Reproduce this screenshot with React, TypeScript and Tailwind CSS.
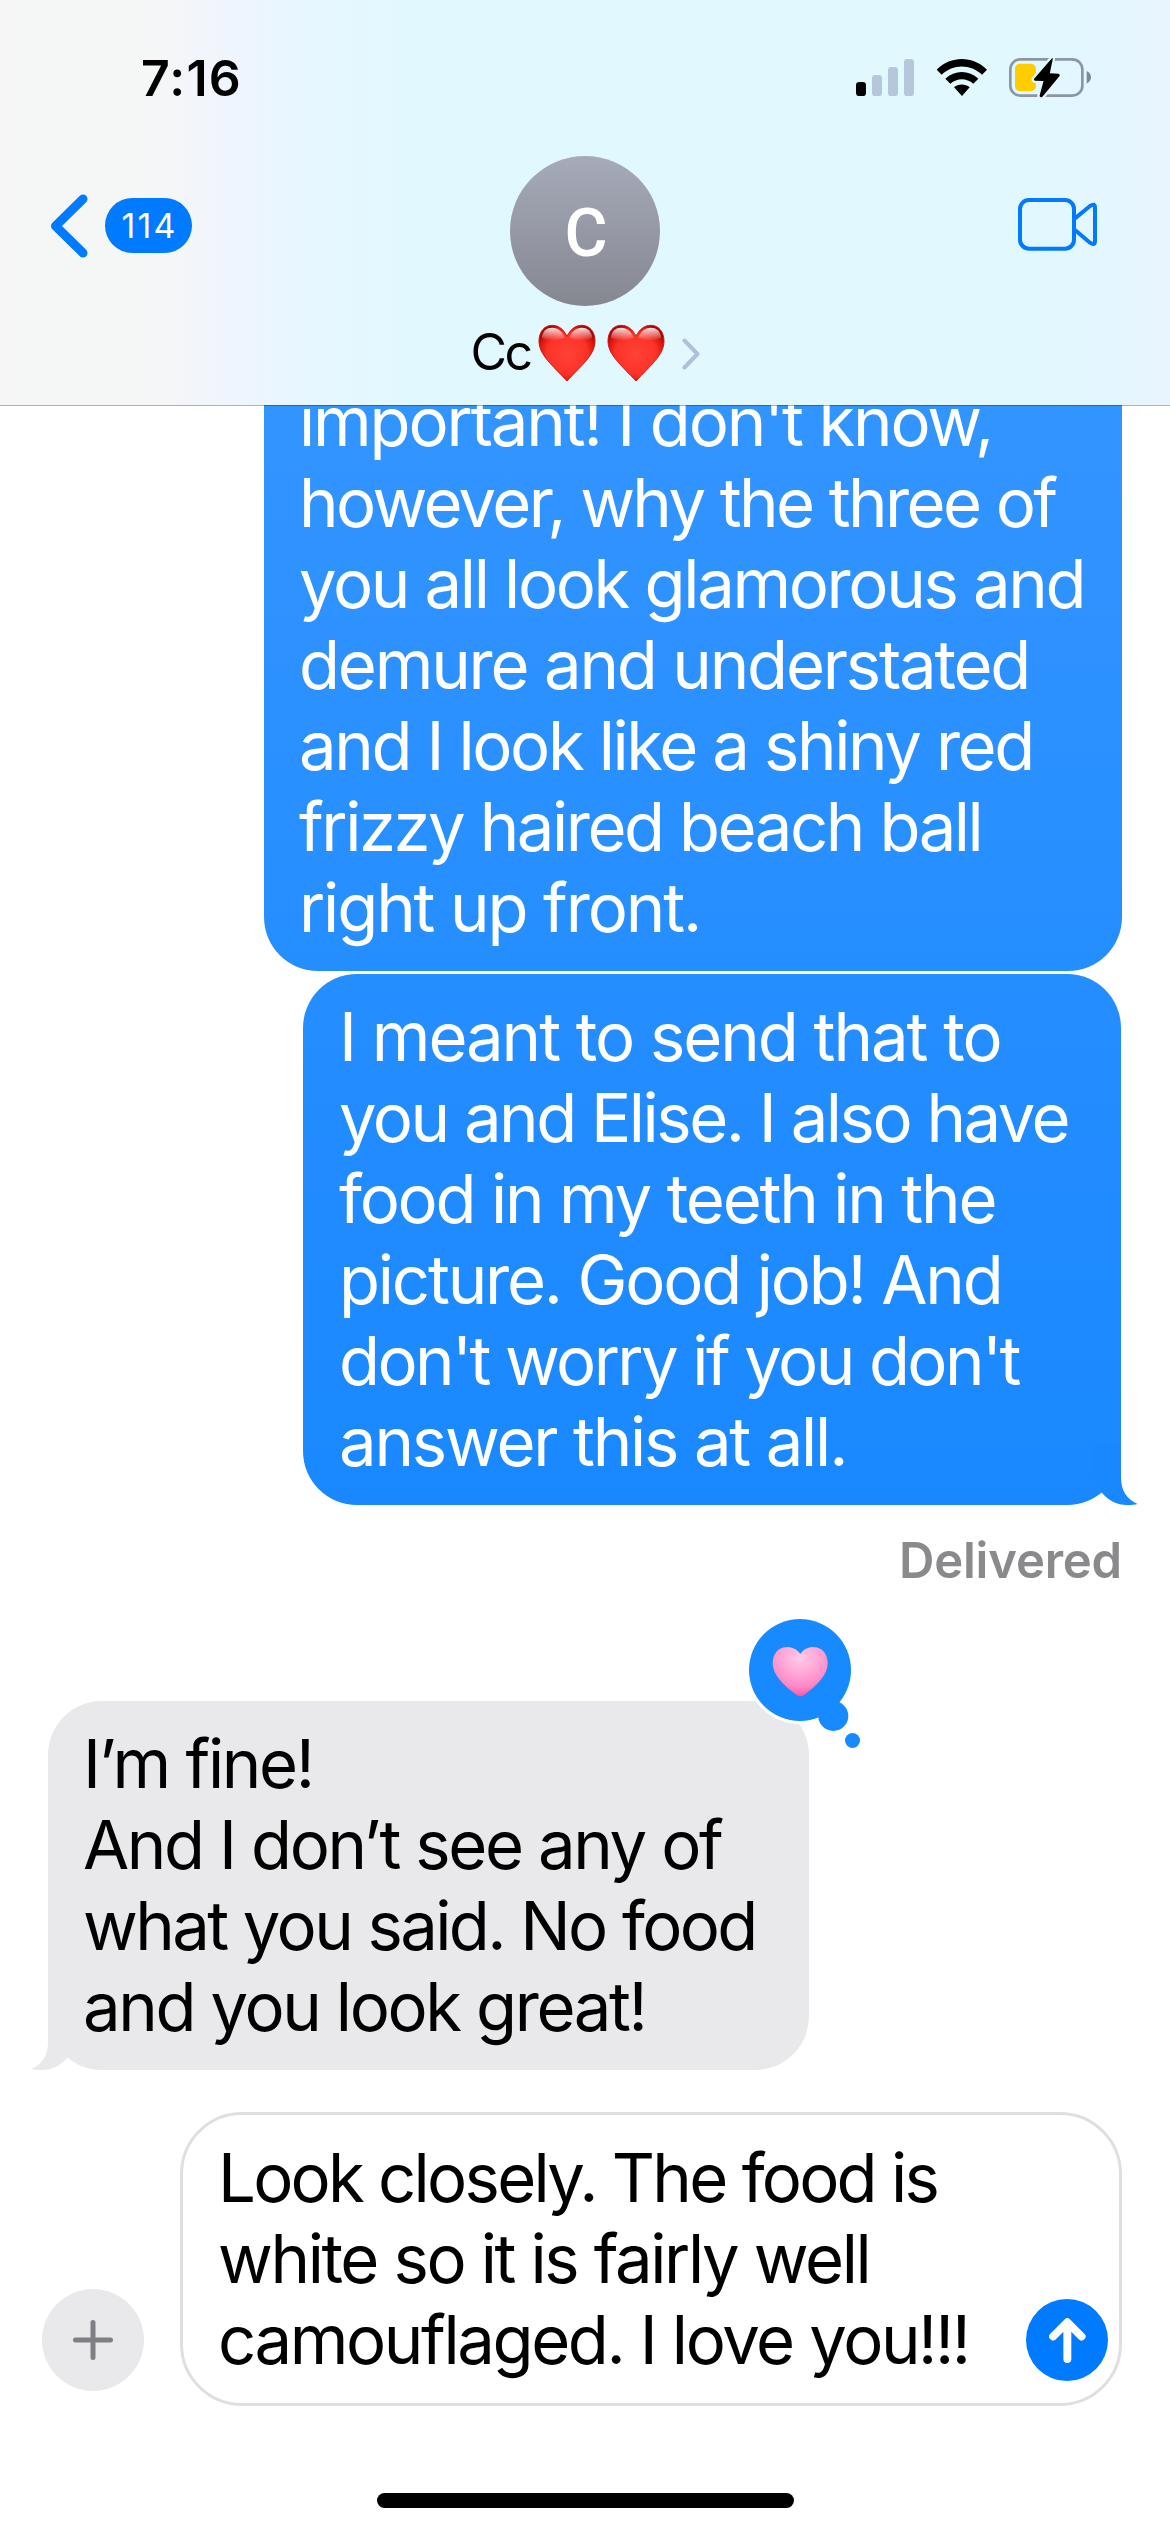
import { clsx } from 'clsx';

interface Line {
  text: string;
  tracking: string;
}

const firstMessage: Line[] = [
  { text: "important! I don't know,", tracking: 'tracking-[-2.15px]' },
  { text: 'however, why the three of', tracking: 'tracking-[-2.6px]' },
  { text: 'you all look glamorous and', tracking: 'tracking-[-2.35px]' },
  { text: 'demure and understated', tracking: 'tracking-[-2.2px]' },
  { text: 'and I look like a shiny red', tracking: 'tracking-[-2.4px]' },
  { text: 'frizzy haired beach ball', tracking: 'tracking-[-2.45px]' },
  { text: 'right up front.', tracking: 'tracking-[-2.15px]' },
];

const secondMessage: Line[] = [
  { text: 'I meant to send that to', tracking: 'tracking-[-2.05px]' },
  { text: 'you and Elise. I also have', tracking: 'tracking-[-2.5px]' },
  { text: 'food in my teeth in the', tracking: 'tracking-[-2.2px]' },
  { text: 'picture. Good job! And', tracking: 'tracking-[-2.2px]' },
  { text: "don't worry if you don't", tracking: 'tracking-[-2.6px]' },
  { text: 'answer this at all.', tracking: 'tracking-[-2.2px]' },
];

const replyMessage: Line[] = [
  { text: 'I’m fine!', tracking: 'tracking-[-2.3px]' },
  { text: 'And I don’t see any of', tracking: 'tracking-[-2.4px]' },
  { text: 'what you said. No food', tracking: 'tracking-[-2.6px]' },
  { text: 'and you look great!', tracking: 'tracking-[-2.4px]' },
];

const draft: Line[] = [
  { text: 'Look closely. The food is', tracking: 'tracking-[-2.75px]' },
  { text: 'white so it is fairly well', tracking: 'tracking-[-2.4px]' },
  { text: 'camouflaged. I love you!!!', tracking: 'tracking-[-2.4px]' },
];

function Lines({ lines }: { lines: Line[] }) {
  return (
    <div className="text-[67px] leading-[81px] whitespace-pre">
      {lines.map((line) => (
        <div key={line.text} className={line.tracking}>
          {line.text}
        </div>
      ))}
    </div>
  );
}

function SignalIcon() {
  return (
    <svg viewBox="78 48 174 132" className="w-[58px] h-11">
      <rect x="78" y="126" width="30" height="42" rx="10" fill="#000" />
      <rect x="126" y="105" width="30" height="63" rx="10" fill="#b7c7db" />
      <rect x="174" y="81" width="30" height="87" rx="10" fill="#b7c7db" />
      <rect x="222" y="57" width="30" height="111" rx="10" fill="#b7c7db" />
    </svg>
  );
}

function WifiIcon() {
  return (
    <svg viewBox="320 48 150 132" className="w-[50px] h-11">
      <path d="M319 89 C361 46 428 46 470 89 L455 104 C421 71 368 71 334 104 Z" />
      <path d="M345 116 C373 89 416 89 444 116 L429 131 C409 113 380 113 360 131 Z" />
      <path d="M371 142 C384 131 405 131 418 142 L395 168 Z" />
    </svg>
  );
}

function BatteryIcon() {
  return (
    <svg viewBox="537 48 247 132" className="w-[82px] h-11">
      <rect x="541" y="58" width="217" height="109" rx="30" fill="none" stroke="#8a95a8" strokeWidth="8" />
      <path d="M771 93 Q784 100 784 112 Q784 124 771 131 Z" fill="#7f8894" />
      <rect x="555" y="71" width="63" height="83" rx="15" fill="#ffcc00" />
      <path
        d="M667 54 L612 117 Q611 122 616 122 L641 123 L629 168 Q632 174 637 171 L690 107 Q690 102 686 101 L660 100 L669 56 Z"
        fill="#000"
        stroke="#e4f7ff"
        strokeWidth="14"
        strokeLinejoin="round"
        paintOrder="stroke"
      />
    </svg>
  );
}

function VideoIcon() {
  return (
    <svg viewBox="54 52 240 162" className="w-20 h-[54px]" fill="none" stroke="#007aff" strokeWidth="12">
      <rect x="60" y="61" width="162" height="146" rx="27" />
      <path d="M224 117 L270 79 Q285 69 285 84 V184 Q285 199 270 189 L224 150" />
    </svg>
  );
}

function RedHeart() {
  return (
    <svg viewBox="230 40 176 176" className="w-[58px] h-[58px]" role="img" aria-label="❤️">
      <defs>
        <radialGradient id="heartBody" cx="0.5" cy="0.52" r="0.56">
          <stop offset="0" stopColor="#ff4236" />
          <stop offset="0.65" stopColor="#fc3227" />
          <stop offset="0.9" stopColor="#d8150d" />
          <stop offset="1" stopColor="#a80402" />
        </radialGradient>
        <linearGradient id="heartShine" x1="0" y1="0" x2="0" y2="1">
          <stop offset="0" stopColor="#fff" stopOpacity="0.9" />
          <stop offset="1" stopColor="#fff" stopOpacity="0" />
        </linearGradient>
      </defs>
      <path
        d="M318 77 C306 53 290 44 273 44 C249 44 233 64 233 92 C233 134 275 166 318 213 C361 166 403 134 403 92 C403 64 387 44 363 44 C346 44 330 53 318 77 Z"
        fill="url(#heartBody)"
        stroke="#cf1a14"
        strokeWidth="3"
      />
      <path d="M241 82 C244 61 256 51 273 51 C291 51 304 62 311 82 Q276 98 241 82 Z" fill="url(#heartShine)" />
      <path d="M395 82 C392 61 380 51 363 51 C345 51 332 62 325 82 Q360 98 395 82 Z" fill="url(#heartShine)" />
    </svg>
  );
}

function Reaction() {
  return (
    <svg viewBox="78 48 345 402" className="absolute left-[698px] -top-[85px] w-[115px] h-[134px]">
      <defs>
        <radialGradient id="pinkHeart" cx="0.5" cy="0.22" r="0.8">
          <stop offset="0" stopColor="#ffcbe9" />
          <stop offset="0.45" stopColor="#ffa3d6" />
          <stop offset="0.75" stopColor="#fe86c5" />
          <stop offset="1" stopColor="#ff4d9c" />
        </radialGradient>
      </defs>
      <circle cx="240" cy="210" r="162" fill="#fff" />
      <g fill="#178aff">
        <circle cx="240" cy="210" r="153" />
        <circle cx="340" cy="348" r="45" />
        <circle cx="397.5" cy="421.5" r="22.5" />
      </g>
      <path
        d="M241 162 C230 147 217 141 202 141 C175 141 158 161 158 190 C158 224 190 257 231 286 Q241 292 251 286 C292 257 323 224 323 190 C323 161 306 141 279 141 C264 141 251 147 241 162 Z"
        fill="url(#pinkHeart)"
      />
    </svg>
  );
}

function BubbleTail({ side }: { side: 'left' | 'right' }) {
  return (
    <svg
      viewBox="0 0 53 60"
      className={clsx(
        'absolute bottom-0 w-[53px] h-[60px]',
        side === 'right' ? '-right-[17px] text-[#1988ff]' : '-left-[17px] -scale-x-100 text-[#e9e9eb]',
      )}
    >
      <path
        fill="currentColor"
        d="M36 0 V32 C36 46 42 54 52.5 59 Q49 60 42 60 C32 60 24 56 17 48 L8 30 V0 Z"
      />
    </svg>
  );
}

function StatusBar() {
  return (
    <div className="flex h-[156px] items-start justify-between pt-12 pl-[141px] pr-[79px]">
      <span className="text-[50px] leading-[60px] font-semibold tracking-[1.2px]">7:16</span>
      <div className="flex gap-[22.5px] pt-2">
        <SignalIcon />
        <WifiIcon />
        <BatteryIcon />
      </div>
    </div>
  );
}

function Header() {
  return (
    <header className="relative z-10 h-[405px] shrink-0 bg-[linear-gradient(90deg,#f6f6f6_0%,#f5f6f7_14%,#eff5fe_20%,#e8f6ff_25%,#e2f8ff_34%,#e1f8ff_88%,#e5f6ff_96%,#eaf4fe_100%)] after:absolute after:inset-x-0 after:top-full after:h-px after:bg-black/30">
      <StatusBar />
      <div className="grid grid-cols-[1fr_auto_1fr] items-start">
        <div className="flex items-start pt-[38px] pl-[50px]">
          <svg viewBox="0 0 38 64" className="w-[38px] h-16" fill="none" stroke="#007aff" strokeWidth="9" strokeLinecap="round" strokeLinejoin="round">
            <path d="M33 5 L5.5 32 L33 59" />
          </svg>
          <span className="ml-[17px] mt-1 flex h-[55px] w-[87px] items-center justify-center rounded-full bg-[#007aff] text-[34px] leading-none tracking-[2.2px] pl-0.5 text-white">
            114
          </span>
        </div>

        <div className="flex flex-col items-center">
          <div className="flex size-[150px] items-center justify-center rounded-full bg-linear-to-b from-[#a6abba] to-[#858790] pt-1 pl-0.5 font-[Roboto] text-[66px] font-medium text-white">
            C
          </div>
          <div className="mt-4 flex items-start">
            <span className="w-[67px] text-[50px] leading-[60px] tracking-[-2.4px]">Cc</span>
            <div className="mt-0.5 flex gap-[11px]">
              <RedHeart />
              <RedHeart />
            </div>
            <svg viewBox="0 0 18 32" className="ml-[17px] mt-4 w-[18px] h-8" fill="none" stroke="#b2bfd8" strokeWidth="4" strokeLinecap="round" strokeLinejoin="round">
              <path d="M2.5 2.5 L15.5 16 L2.5 29.5" />
            </svg>
          </div>
        </div>

        <div className="flex justify-end pt-[41px] pr-[72px]">
          <VideoIcon />
        </div>
      </div>
    </header>
  );
}

function Thread() {
  return (
    <main className="flex flex-1 min-h-0 flex-col justify-end overflow-hidden pb-[42px]">
      <div className="ml-[264px] mr-12 shrink-0 rounded-b-[54px] bg-linear-to-b from-[#3395ff] to-[#258eff] pt-[22px] pb-[23px] pl-[35px] text-white">
        <Lines lines={firstMessage} />
      </div>

      <div className="relative mt-[3px] ml-[303px] mr-[49px] shrink-0 rounded-[54px] bg-linear-to-b from-[#258eff] to-[#1988ff] pt-[22px] pb-[23px] pl-9 text-white">
        <Lines lines={secondMessage} />
        <BubbleTail side="right" />
      </div>

      <div className="mt-[26px] mr-12 shrink-0 text-right text-[49px] leading-[60px] font-semibold tracking-[-0.2px] text-[#8a8a8d]">
        Delivered
      </div>

      <div className="relative mt-[110px] ml-12 w-[761px] shrink-0 rounded-[54px] bg-[#e9e9eb] pt-[22px] pb-[23px] pl-[35px]">
        <Lines lines={replyMessage} />
        <BubbleTail side="left" />
        <Reaction />
      </div>
    </main>
  );
}

function Composer() {
  return (
    <footer className="flex shrink-0 flex-col items-center pb-6">
      <div className="flex w-full items-end pl-[42px] pr-12">
        <button className="mb-[15px] flex size-[102px] items-center justify-center rounded-full bg-[#e9e9eb]">
          <svg viewBox="0 0 40 40" className="size-10" stroke="#7f7f86" strokeWidth="5" strokeLinecap="round">
            <path d="M20 2.5 V37.5 M2.5 20 H37.5" />
          </svg>
        </button>
        <div className="ml-9 flex flex-1 items-end justify-between rounded-[62px] border-[3px] border-[#dfdfdf] pt-[22px] pr-[11px] pl-[35px]">
          <div className="pb-[23px]">
            <Lines lines={draft} />
          </div>
          <button className="mb-[22px] flex size-[82px] items-center justify-center rounded-full bg-[#007aff]">
            <svg viewBox="146 112 111 136" className="w-[37px] h-[45px]" fill="none" stroke="#fff" strokeWidth="24" strokeLinecap="round" strokeLinejoin="round">
              <path d="M201 236 V126 M158 168 L201 125 L244 168" />
            </svg>
          </button>
        </div>
      </div>
      <div className="mt-[87px] h-[15px] w-[417px] rounded-full bg-black" />
    </footer>
  );
}

export default function App() {
  return (
    <div className="flex h-[2532px] w-[1170px] flex-col overflow-hidden bg-white font-[Inter,sans-serif] text-black">
      <Header />
      <Thread />
      <Composer />
    </div>
  );
}
